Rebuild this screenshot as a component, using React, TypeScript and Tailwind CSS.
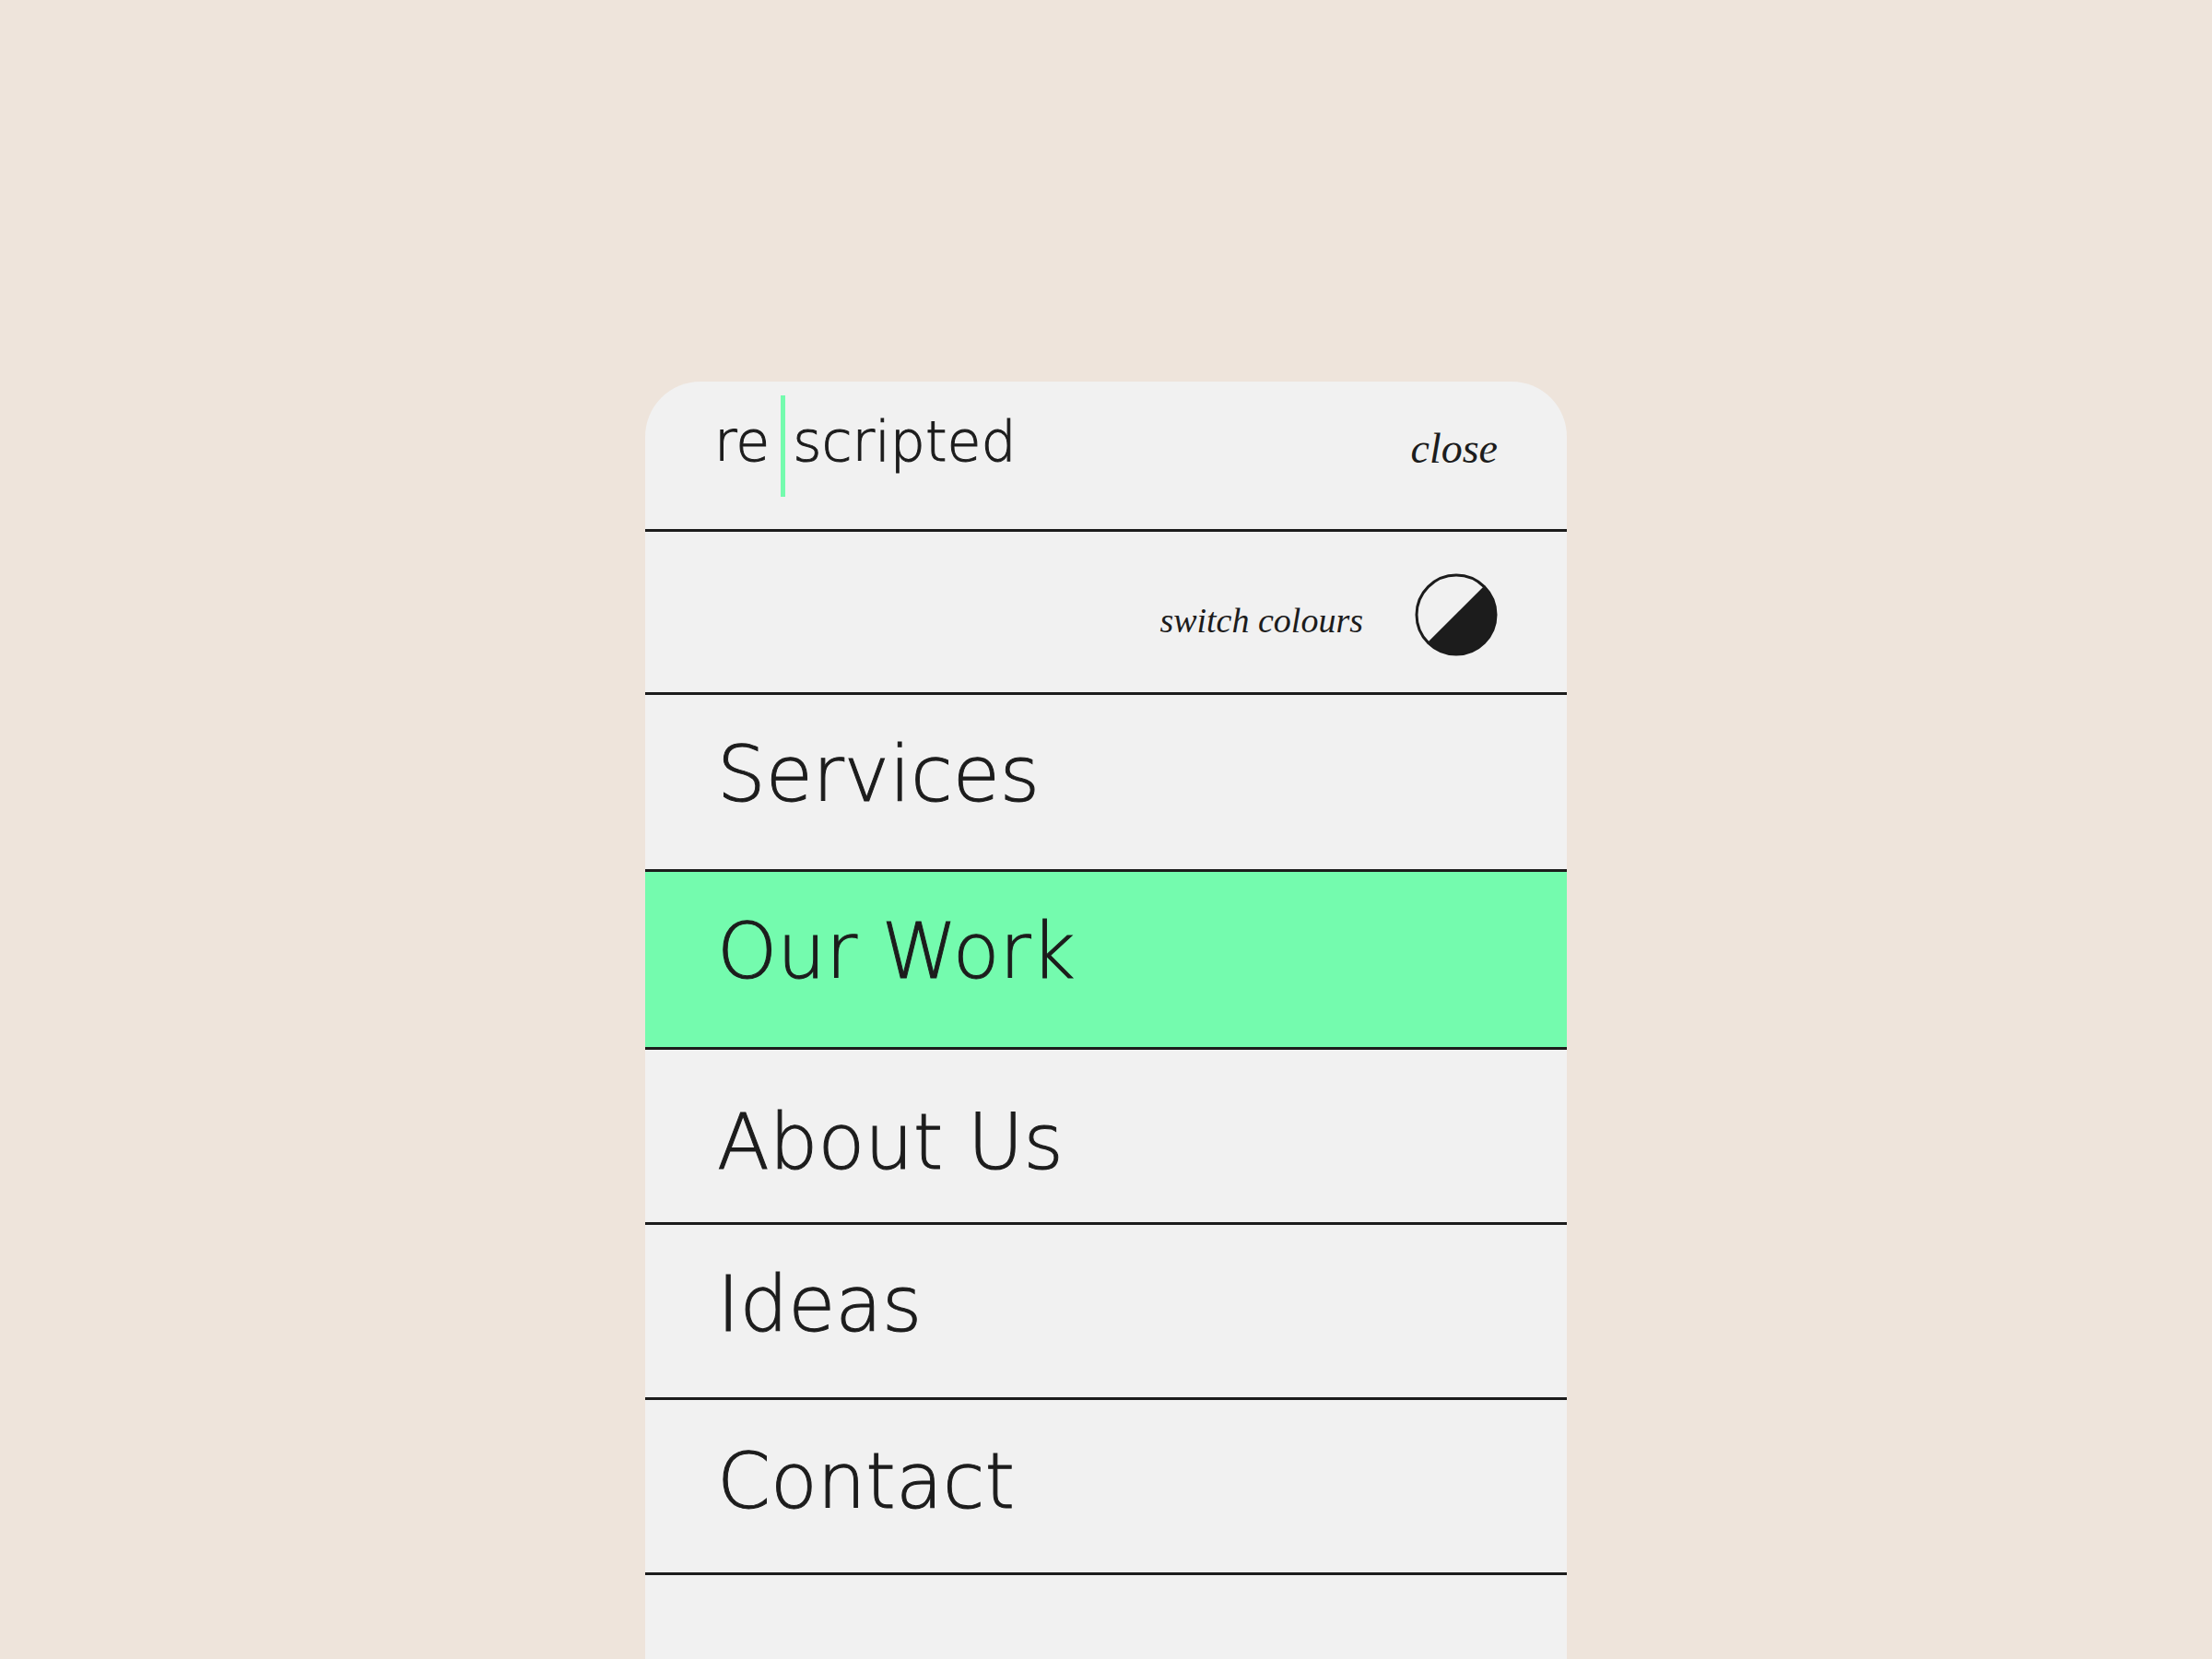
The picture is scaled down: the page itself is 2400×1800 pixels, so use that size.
import { useState } from "react"

interface MenuItem {
  label: string
  href: string
  spacing: string
}

const menuItems: MenuItem[] = [
  { label: "Services", href: "#services", spacing: "pt-[39px] pb-[54px]" },
  { label: "Our Work", href: "#work", spacing: "pt-[39px] pb-[55px]" },
  { label: "About Us", href: "#about", spacing: "pt-[53px] pb-[38px]" },
  { label: "Ideas", href: "#ideas", spacing: "pt-[39px] pb-[52px]" },
  { label: "Contact", href: "#contact", spacing: "pt-[41px] pb-[50px]" },
]

function Logo() {
  return (
    <a
      href="#home"
      aria-label="rescripted"
      className="flex items-start font-['DejaVu_Sans_Light','DejaVu_Sans',sans-serif] text-[60px] leading-[64px] font-extralight [-webkit-text-stroke:1px_#1c1c1c]"
    >
      <span className="pt-[18px]">re</span>
      <span className="mr-2 ml-3 h-[110px] w-[5px] bg-[#74fbae]" />
      <span className="pt-[18px]">scripted</span>
    </a>
  )
}

function ContrastIcon() {
  return (
    <svg viewBox="0 0 90 90" className="size-[90px]" aria-hidden="true">
      <circle cx="45" cy="45" r="43" fill="none" stroke="currentColor" strokeWidth="3" />
      <path d="M75.8 13.2L76.3 13.7A44.3 44.3 0 0 1 13.7 76.3L13.2 75.8Z" fill="currentColor" />
    </svg>
  )
}

export default function App() {
  const [active, setActive] = useState("Our Work")

  return (
    <div className="flex min-h-screen flex-col items-center bg-[#eee4db] pt-[23vh] text-[#1c1c1c]">
      <div className="flex w-5/12 flex-1 flex-col overflow-hidden rounded-t-[60px] bg-[#f1f1f1]">
        {/* Header */}
        <header className="flex items-start justify-between border-b-3 border-[#1c1c1c] px-[75px] pt-[15px] pb-[35px]">
          <Logo />
          <button type="button" className="pt-[30px] font-['Liberation_Serif',serif] text-[46px] leading-[56px] italic">
            close
          </button>
        </header>

        {/* Colour switch */}
        <div className="border-b-3 border-[#1c1c1c] px-[75px] pt-[45px] pb-[39px]">
          <button type="button" className="ml-auto flex items-center gap-14">
            <span className="pt-3 font-['Liberation_Serif',serif] text-[38px] leading-[48px] italic">switch colours</span>
            <ContrastIcon />
          </button>
        </div>

        {/* Menu */}
        <nav>
          {menuItems.map((item) => (
            <a
              key={item.label}
              href={item.href}
              onClick={() => setActive(item.label)}
              className={`block border-b-3 border-[#1c1c1c] px-[78px] font-['DejaVu_Sans_Light','DejaVu_Sans',sans-serif] text-[83px] leading-[96px] font-extralight [-webkit-text-stroke:1px_#1c1c1c] ${item.spacing} ${
                active === item.label ? "bg-[#74fbae]" : ""
              }`}
            >
              {item.label}
            </a>
          ))}
        </nav>
      </div>
    </div>
  )
}
